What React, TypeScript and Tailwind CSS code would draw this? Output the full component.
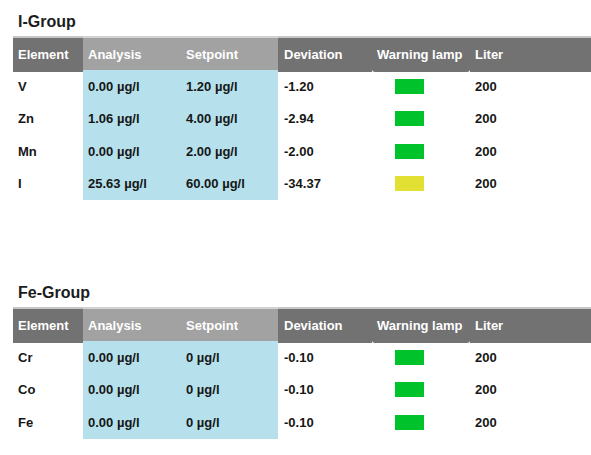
import React from 'react';

type Row = {
  element: string;
  analysis: string;
  setpoint: string;
  deviation: string;
  lamp: 'green' | 'yellow';
  liter: string;
};

const iGroup: Row[] = [
  { element: 'V', analysis: '0.00 µg/l', setpoint: '1.20 µg/l', deviation: '-1.20', lamp: 'green', liter: '200' },
  { element: 'Zn', analysis: '1.06 µg/l', setpoint: '4.00 µg/l', deviation: '-2.94', lamp: 'green', liter: '200' },
  { element: 'Mn', analysis: '0.00 µg/l', setpoint: '2.00 µg/l', deviation: '-2.00', lamp: 'green', liter: '200' },
  { element: 'I', analysis: '25.63 µg/l', setpoint: '60.00 µg/l', deviation: '-34.37', lamp: 'yellow', liter: '200' },
];

const feGroup: Row[] = [
  { element: 'Cr', analysis: '0.00 µg/l', setpoint: '0 µg/l', deviation: '-0.10', lamp: 'green', liter: '200' },
  { element: 'Co', analysis: '0.00 µg/l', setpoint: '0 µg/l', deviation: '-0.10', lamp: 'green', liter: '200' },
  { element: 'Fe', analysis: '0.00 µg/l', setpoint: '0 µg/l', deviation: '-0.10', lamp: 'green', liter: '200' },
];

const cols = 'grid grid-cols-[70px_98px_97px_94px_98px_1fr]';

const GroupTable: React.FC<{ title: string; rows: Row[] }> = ({ title, rows }) => {
  return (
    <div>
      <h2 className="h-[20px] pl-[5px] mb-[4px] text-[16px] leading-[20px] font-bold text-[#1c1c1c]">{title}</h2>

      {/* Header */}
      <div className={`${cols} h-[34px] text-[13px] font-bold text-white`}>
        <div className="flex items-center pl-[5px] bg-[#727272] border-t-2 border-[#c6c6c6]">Element</div>
        <div className="flex items-center pl-[5px] bg-[#a2a2a2] border-t-2 border-[#d2d2d2]">Analysis</div>
        <div className="flex items-center pl-[5px] bg-[#a2a2a2] border-t-2 border-[#d2d2d2]">Setpoint</div>
        <div className="flex items-center pl-[6px] bg-[#727272] border-t-2 border-[#c6c6c6]">Deviation</div>
        <div className="relative z-10 flex items-center pl-[5px] bg-[#727272] border-t-2 border-[#c6c6c6] h-[36px] rounded-b-[3px]">
          Warning lamp
        </div>
        <div className="flex items-center pl-[5px] bg-[#727272] border-t-2 border-[#c6c6c6]">Liter</div>
      </div>

      {/* Rows */}
      <div className="text-[13px] font-bold text-[#161616]">
        {rows.map((r) => (
          <div key={r.element} className={`${cols} h-[32.5px]`}>
            <div className="flex items-center pl-[5px]">{r.element}</div>
            <div className="flex items-center pl-[5px] bg-[#b5e0ec]">{r.analysis}</div>
            <div className="flex items-center pl-[5px] bg-[#b5e0ec]">{r.setpoint}</div>
            <div className="flex items-center pl-[6px]">{r.deviation}</div>
            <div className="flex items-center pl-[23px]">
              <div className={r.lamp === 'green' ? 'w-[29px] h-[15px] bg-[#00c22b]' : 'w-[29px] h-[15px] bg-[#e3e034]'} />
            </div>
            <div className="flex items-center pl-[5px]">{r.liter}</div>
          </div>
        ))}
      </div>
    </div>
  );
};

export default function App() {
  return (
    <div className="w-[591px] h-[455px] bg-white pl-[13px] pt-[12px] overflow-hidden font-['Liberation_Sans',Arial,sans-serif]">
      <GroupTable title="I-Group" rows={iGroup} />
      <div className="h-[83px]" />
      <GroupTable title="Fe-Group" rows={feGroup} />
    </div>
  );
}
